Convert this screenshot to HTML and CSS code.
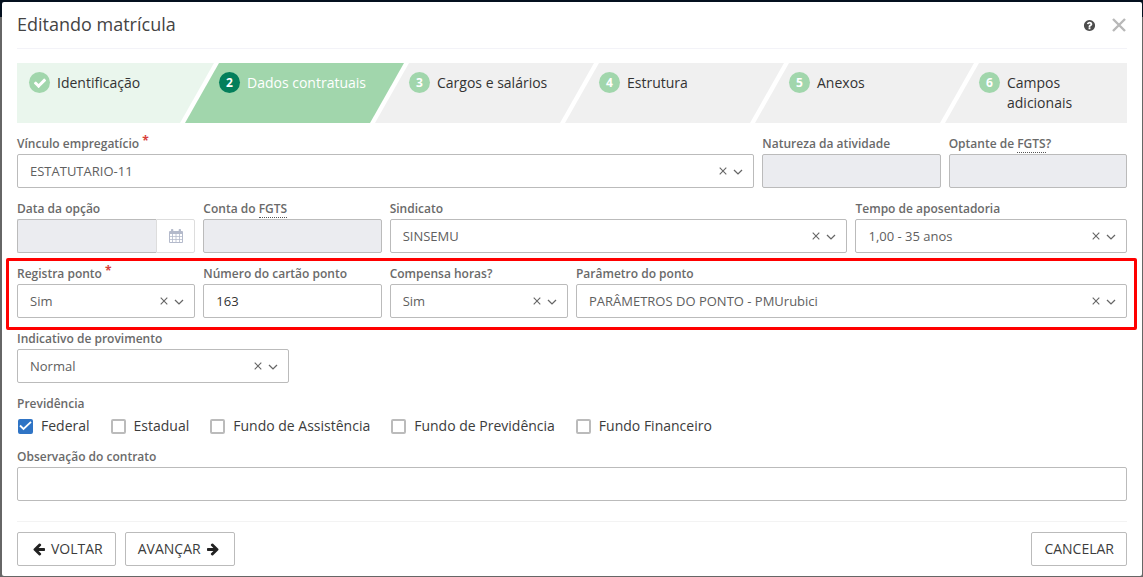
FILE: index.html
```html
<!DOCTYPE html>
<html lang="pt-BR">
<head>
<meta charset="utf-8">
<meta name="viewport" content="width=device-width, initial-scale=1">
<title>Editando matrícula</title>
<link rel="stylesheet" href="styles.css">
</head>
<body>
<svg class="sprite" aria-hidden="true">
  <symbol id="i-x" viewBox="0 0 8 8"><path d="M.7.7 7.3 7.3M7.3.7.7 7.3" fill="none" stroke="currentColor" stroke-width="1.1"/></symbol>
  <symbol id="i-down" viewBox="0 0 10 8"><path d="M1 2 5 5.900 9 2" fill="none" stroke="currentColor" stroke-width="1.300"/></symbol>
  <symbol id="i-check" viewBox="0 0 1792 1792"><path fill="currentColor" d="M1671 566q0 40-28 68l-724 724-136 136q-28 28-68 28t-68-28l-136-136-362-362q-28-28-28-68t28-68l136-136q28-28 68-28t68 28l294 295 656-657q28-28 68-28t68 28l136 136q28 28 28 68z"/></symbol>
  <symbol id="i-left" viewBox="0 0 1792 1792"><path fill="currentColor" d="M1664 896v128q0 53-32.500 90.500t-84.500 37.500h-704l293 294q38 36 38 90t-38 90l-75 76q-37 37-90 37-52 0-91-37l-651-652q-37-37-37-90 0-52 37-91l651-650q38-38 91-38 52 0 90 38l75 74q38 38 38 91t-38 91l-293 293h704q52 0 84.500 37.500t32.500 90.500z"/></symbol>
  <symbol id="i-help" viewBox="0 0 1792 1792"><path fill="currentColor" d="M1024 1376v-192q0-14-9-23t-23-9h-192q-14 0-23 9t-9 23v192q0 14 9 23t23 9h192q14 0 23-9t9-23zm256-672q0-88-55.500-163t-138.500-116-170-41q-243 0-371 213-15 24 8 42l132 100q7 6 19 6 16 0 25-12 53-68 86-92 34-24 86-24 48 0 85.500 26t37.500 59q0 38-20 61t-68 45q-63 28-115.500 86.500t-52.500 125.500v36q0 14 9 23t23 9h192q14 0 23-9t9-23q0-19 21.500-49.500t54.500-49.500q32-18 49-28.500t46-35 44.500-48 28-60.500 12.500-81zm384 192q0 209-103 385.500t-279.500 279.500-385.500 103-385.500-103-279.500-279.500-103-385.500 103-385.500 279.500-279.500 385.500-103 385.500 103 279.500 279.500 103 385.500z"/></symbol>
  <symbol id="i-calendar" viewBox="0 0 14 14"><path fill="currentColor" fill-rule="evenodd" d="M1 2h1V.8q0-.8.8-.8h.7q.8 0 .8.8V2h5.400V.8q0-.8.8-.8h.7q.8 0 .8.8V2h1q1 0 1 1v10q0 1-1 1H1q-1 0-1-1V3q0-1 1-1zM1 5v2h2.200V5zM4 5v2h2.600V5zM7.400 5v2H10V5zM10.800 5v2H13V5zM1 7.800v2.200h2.200V7.800zM4 7.800v2.200h2.600V7.800zM7.400 7.800v2.200H10V7.800zM10.800 7.800v2.200H13V7.800zM1 10.800V13h2.200v-2.200zM4 10.800V13h2.600v-2.200zM7.400 10.800V13H10v-2.200zM10.800 10.800V13H13v-2.200z"/></symbol>
</svg>

<main class="modal" role="dialog" aria-labelledby="title">
  <header class="modal-header">
    <h1 class="title" id="title">Editando matrícula</h1>
    <button class="icon-button help" type="button" aria-label="Ajuda"><svg width="13" height="13"><use href="#i-help"/></svg></button>
    <button class="icon-button close" type="button" aria-label="Fechar"><svg width="14" height="14" viewBox="0 0 14 14"><path d="M1 1 13 13M13 1 1 13" fill="none" stroke="currentColor" stroke-width="2.400"/></svg></button>
  </header>

  <ol class="steps">
    <li class="step done"><span class="badge"><svg width="14" height="14"><use href="#i-check"/></svg></span><span class="step-name">Identificação</span></li>
    <li class="step active" aria-current="step"><span class="badge">2</span><span class="step-name">Dados contratuais</span></li>
    <li class="step"><span class="badge">3</span><span class="step-name">Cargos e salários</span></li>
    <li class="step"><span class="badge">4</span><span class="step-name">Estrutura</span></li>
    <li class="step"><span class="badge">5</span><span class="step-name">Anexos</span></li>
    <li class="step"><span class="badge">6</span><span class="step-name">Campos adicionais</span></li>
  </ol>

  <form class="form">
    <div class="row">
      <div class="field span-8">
        <label class="label" for="vinculo">Vínculo empregatício <span class="required">*</span></label>
        <div class="picker"><select class="control" id="vinculo"><option>ESTATUTARIO-11</option></select><button class="icon-button clear" type="button" aria-label="Limpar"><svg width="8" height="8"><use href="#i-x"/></svg></button><svg class="chevron" width="10" height="8"><use href="#i-down"/></svg></div>
      </div>
      <div class="field span-2">
        <label class="label" for="natureza">Natureza da atividade</label>
        <input class="control" id="natureza" type="text" disabled>
      </div>
      <div class="field span-2">
        <label class="label" for="optante">Optante de <abbr class="abbr">FGTS</abbr>?</label>
        <input class="control" id="optante" type="text" disabled>
      </div>
    </div>

    <div class="row">
      <div class="field span-2">
        <label class="label" for="data">Data da opção</label>
        <div class="date"><input class="control" id="data" type="text" disabled><button class="date-button" type="button" disabled aria-label="Abrir calendário"><svg width="14" height="14"><use href="#i-calendar"/></svg></button></div>
      </div>
      <div class="field span-2">
        <label class="label" for="conta">Conta do <abbr class="abbr">FGTS</abbr></label>
        <input class="control" id="conta" type="text" disabled>
      </div>
      <div class="field span-5">
        <label class="label" for="sindicato">Sindicato</label>
        <div class="picker"><select class="control" id="sindicato"><option>SINSEMU</option></select><button class="icon-button clear" type="button" aria-label="Limpar"><svg width="8" height="8"><use href="#i-x"/></svg></button><svg class="chevron" width="10" height="8"><use href="#i-down"/></svg></div>
      </div>
      <div class="field span-3">
        <label class="label" for="tempo">Tempo de aposentadoria</label>
        <div class="picker"><select class="control" id="tempo"><option>1,00 - 35 anos</option></select><button class="icon-button clear" type="button" aria-label="Limpar"><svg width="8" height="8"><use href="#i-x"/></svg></button><svg class="chevron" width="10" height="8"><use href="#i-down"/></svg></div>
      </div>
    </div>

    <div class="row highlighted">
      <div class="field span-2">
        <label class="label" for="registra">Registra ponto <span class="required">*</span></label>
        <div class="picker"><select class="control" id="registra"><option>Sim</option></select><button class="icon-button clear" type="button" aria-label="Limpar"><svg width="8" height="8"><use href="#i-x"/></svg></button><svg class="chevron" width="10" height="8"><use href="#i-down"/></svg></div>
      </div>
      <div class="field span-2">
        <label class="label" for="cartao">Número do cartão ponto</label>
        <input class="control typed" id="cartao" type="text" value="163">
      </div>
      <div class="field span-2">
        <label class="label" for="compensa">Compensa horas?</label>
        <div class="picker"><select class="control" id="compensa"><option>Sim</option></select><button class="icon-button clear" type="button" aria-label="Limpar"><svg width="8" height="8"><use href="#i-x"/></svg></button><svg class="chevron" width="10" height="8"><use href="#i-down"/></svg></div>
      </div>
      <div class="field span-6">
        <label class="label" for="parametro">Parâmetro do ponto</label>
        <div class="picker"><select class="control" id="parametro"><option>PARÂMETROS DO PONTO - PMUrubici</option></select><button class="icon-button clear" type="button" aria-label="Limpar"><svg width="8" height="8"><use href="#i-x"/></svg></button><svg class="chevron" width="10" height="8"><use href="#i-down"/></svg></div>
      </div>
    </div>

    <div class="row">
      <div class="field span-3">
        <label class="label" for="provimento">Indicativo de provimento</label>
        <div class="picker"><select class="control" id="provimento"><option>Normal</option></select><button class="icon-button clear" type="button" aria-label="Limpar"><svg width="8" height="8"><use href="#i-x"/></svg></button><svg class="chevron" width="10" height="8"><use href="#i-down"/></svg></div>
      </div>
    </div>

    <div class="group" role="group" aria-labelledby="previdencia">
      <span class="label" id="previdencia">Previdência</span>
      <div class="checks">
        <label class="check"><input class="box" type="checkbox" checked><svg class="tick" width="15" height="15" viewBox="0 0 15 15"><path d="M2 6.500 5.500 10 13 2.800" fill="none" stroke="currentColor" stroke-width="1.800"/></svg>Federal</label>
        <label class="check"><input class="box" type="checkbox">Estadual</label>
        <label class="check"><input class="box" type="checkbox">Fundo de Assistência</label>
        <label class="check"><input class="box" type="checkbox">Fundo de Previdência</label>
        <label class="check"><input class="box" type="checkbox">Fundo Financeiro</label>
      </div>
    </div>

    <div class="field">
      <label class="label" for="observacao">Observação do contrato</label>
      <input class="control" id="observacao" type="text">
    </div>
  </form>

  <footer class="modal-footer">
    <button class="button back" type="button"><svg width="14" height="14"><use href="#i-left"/></svg>VOLTAR</button>
    <button class="button next" type="button">AVANÇAR<svg class="flip" width="14" height="14"><use href="#i-left"/></svg></button>
    <button class="button cancel" type="button">CANCELAR</button>
  </footer>
</main>
</body>
</html>
```
FILE: styles.css
```css
* {
  box-sizing: border-box;
}

body {
  margin: 0;
  padding: 2px 1px 1px 2px;
  background: #666 linear-gradient(#04101f, #04101f) 0 0 / 100% 17px no-repeat;
  color: #3c3c3c;
  font-family: "Open Sans", sans-serif;
  font-size: 14px;
  line-height: 20px;
}

.sprite {
  display: none;
}

.modal {
  padding: 0 15px 10px;
  border-radius: 2px;
  background: #fff;
}

.modal-header {
  display: flex;
  align-items: center;
  height: 47px;
  border-bottom: 1px solid #f3f3f8;
}

.title {
  flex: 1;
  margin: 0;
  padding-bottom: 2px;
  color: #444;
  font-size: 18px;
  font-weight: 400;
  line-height: 24px;
}

.icon-button {
  display: grid;
  place-items: center;
  padding: 0;
  border: 0;
  background: none;
}

.help {
  margin-right: 15px;
  color: #4d4d4d;
}

.close {
  width: 16px;
  color: #b8b8b8;
}

.steps {
  display: grid;
  grid-template-columns: repeat(5, 190fr) 160fr;
  margin: 14px 0 11px;
  padding: 0;
  list-style: none;
}

/* Each step reaches past its grid cell so the slanted edges interlock. */
.step {
  display: flex;
  gap: 7px;
  min-height: 60px;
  margin: 0 -7px 0 -22px;
  padding: 9px 19px 0 34px;
  background: #f0f0f0;
  color: #333;
  clip-path: polygon(34px 0, 100% 0, calc(100% - 34px) 100%, 0 100%);
}

.step:first-child {
  margin-left: 0;
  padding-left: 12px;
  clip-path: polygon(0 0, 100% 0, calc(100% - 34px) 100%, 0 100%);
}

.step:last-child {
  margin-right: 0;
  clip-path: polygon(34px 0, 100% 0, 100% 100%, 0 100%);
}

.step.done {
  background: #eaf6ed;
}

.step.active {
  background: #a1d6ac;
  color: #fff;
}

.step-name {
  padding-top: 1px;
}

.badge {
  display: grid;
  flex: none;
  place-items: center;
  width: 21px;
  height: 21px;
  border-radius: 50%;
  background: #a1d6ac;
  color: #fff;
  font-size: 12px;
  font-weight: 700;
}

.active .badge {
  background: #047f5b;
}

.form {
  display: grid;
  gap: 11px;
}

.row {
  display: grid;
  grid-template-columns: repeat(12, 1fr);
  gap: 8px;
}

.span-2 { grid-column: span 2; }
.span-3 { grid-column: span 3; }
.span-5 { grid-column: span 5; }
.span-6 { grid-column: span 6; }
.span-8 { grid-column: span 8; }

.highlighted {
  position: relative;
}

.highlighted::after {
  position: absolute;
  inset: -6px -10px -12px -11px;
  border: 3px solid #f00;
  border-radius: 2px;
  content: "";
  pointer-events: none;
}

.field {
  min-width: 0;
}

.label {
  display: block;
  color: #6a6a6a;
  font-size: 12px;
  font-weight: 600;
  line-height: 20px;
}

.required {
  color: #d8403a;
  font-weight: 700;
  line-height: 12px;
  vertical-align: 3px;
}

.abbr {
  border-bottom: 1px dotted #555;
}

.control {
  display: block;
  width: 100%;
  height: 34px;
  padding: 0 12px;
  border: 1px solid #bbb;
  border-radius: 2px;
  appearance: none;
  background: #fff;
  color: #606060;
  font: 13px/20px "Open Sans", sans-serif;
}

.control:disabled {
  background: #ebecf0;
}

.typed {
  color: #333;
}

.picker {
  position: relative;
}

.clear {
  position: absolute;
  top: 13px;
  right: 27px;
  color: #666;
}

.chevron {
  position: absolute;
  top: 14px;
  right: 11px;
  color: #666;
  pointer-events: none;
}

.date {
  display: flex;
}

.date .control {
  flex: 1;
  min-width: 0;
  border-right: 0;
  border-radius: 2px 0 0 2px;
}

.date-button {
  display: grid;
  place-items: center;
  width: 39px;
  border: 1px solid #ddd;
  border-radius: 0 2px 2px 0;
  background: #fff;
  color: #b4bacb;
}

.checks {
  display: flex;
  flex-wrap: wrap;
  gap: 21px;
  padding: 2px 1px 0;
}

.check {
  display: flex;
  position: relative;
  align-items: center;
  gap: 8px;
}

.box {
  width: 15px;
  height: 15px;
  margin: 0;
  border: 2px solid #bbb;
  border-radius: 2px;
  appearance: none;
  background: #fff;
}

.box:checked {
  border-color: #2f74c5;
  background: #2f74c5;
}

.tick {
  position: absolute;
  left: 0;
  color: #fff;
  pointer-events: none;
}

.modal-footer {
  display: flex;
  gap: 9px;
  margin-top: 20px;
  padding-top: 10px;
  border-top: 1px solid #f3f3f3;
}

.button {
  display: flex;
  align-items: center;
  gap: 5px;
  height: 34px;
  padding: 0 12px;
  border: 1px solid #bbb;
  border-radius: 2px;
  background: #fff;
  color: #3c3c3c;
  font: 14px/20px "Open Sans", sans-serif;
}

.button svg {
  color: #222;
}

.back {
  padding-left: 14px;
}

.next {
  padding-right: 14px;
}

.flip {
  transform: scaleX(-1);
}

.cancel {
  margin-left: auto;
}
```
